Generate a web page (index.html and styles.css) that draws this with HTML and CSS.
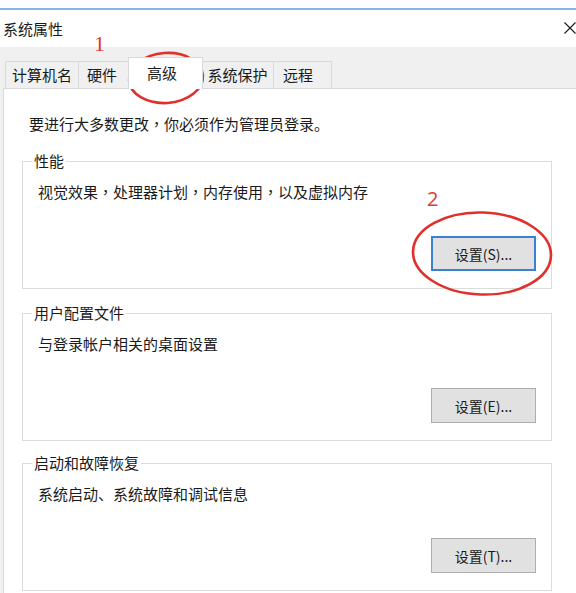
FILE: index.html
```html
<!DOCTYPE html>
<html lang="zh-CN">
<head>
<meta charset="utf-8">
<title>系统属性</title>
<link rel="stylesheet" href="styles.css">
</head>
<body>
<div class="window">
  <div class="topline"></div>
  <div class="titlebar">
    <span class="title">系统属性</span>
    <svg class="close" width="12" height="12" viewBox="0 0 12 12"><path d="M0.5 0.5 L11.5 11.5 M11.5 0.5 L0.5 11.5" stroke="#1a1a1a" stroke-width="1.1" fill="none"/></svg>
  </div>
  <div class="tabstrip">
    <div class="tab t1">计算机名</div>
    <div class="tab t2">硬件</div>
    <div class="tab t3 selected">高级</div>
    <div class="tab t4">系统保护</div>
    <div class="tab t5">远程</div>
  </div>
  <div class="panel">
    <p class="intro">要进行大多数更改<span class="cm">，</span>你必须作为管理员登录。</p>
    <fieldset class="group">
      <legend>性能</legend>
      <p class="desc">视觉效果<span class="cm">，</span>处理器计划<span class="cm">，</span>内存使用<span class="cm">，</span>以及虚拟内存</p>
      <div class="btnrow"><button class="btn default">设置(S)...</button></div>
    </fieldset>
    <fieldset class="group">
      <legend>用户配置文件</legend>
      <p class="desc">与登录帐户相关的桌面设置</p>
      <div class="btnrow"><button class="btn">设置(E)...</button></div>
    </fieldset>
    <fieldset class="group">
      <legend>启动和故障恢复</legend>
      <p class="desc">系统启动、系统故障和调试信息</p>
      <div class="btnrow"><button class="btn">设置(T)...</button></div>
    </fieldset>
  </div>

  <span class="mark mark1">1</span>
  <svg class="ring ring1" width="82" height="56" viewBox="0 0 82 56"><ellipse cx="41" cy="28" rx="37" ry="25" transform="rotate(-4 41 28)" fill="none" stroke="#e0302b" stroke-width="2.6"/></svg>
  <span class="mark mark2">2</span>
  <svg class="ring ring2" width="146" height="90" viewBox="0 0 146 90"><ellipse cx="73" cy="44.5" rx="69" ry="41" transform="rotate(2 73 44.5)" fill="none" stroke="#e0302b" stroke-width="2.6"/></svg>
</div>
</body>
</html>
```

FILE: styles.css
```css
html, body {
  margin: 0;
  padding: 0;
}
body {
  width: 576px;
  height: 593px;
  overflow: hidden;
  background: #f0f0f0;
  font-family: "Noto Sans CJK SC", "Noto Sans", sans-serif;
  color: #1a1a1a;
}
.window {
  position: relative;
  width: 576px;
  height: 593px;
}
.topline {
  height: 8px;
  background: #ffffff;
  border-bottom: 2px solid #8cb1e3;
}
.titlebar {
  height: 37px;
  background: #ffffff;
  display: flex;
  align-items: center;
  justify-content: space-between;
  padding-left: 3px;
}
.title {
  font-size: 15px;
  line-height: 20px;
}
.close {
  display: block;
  margin-top: -1px;
}
.tabstrip {
  height: 41px;
  box-sizing: border-box;
  display: flex;
  align-items: flex-end;
  padding-left: 5px;
}
.tab {
  position: relative;
  box-sizing: border-box;
  height: 27px;
  line-height: 26px;
  font-size: 15px;
  text-align: center;
  border-top: 1px solid #d9d9d9;
  border-left: 1px solid #d9d9d9;
  background: #f0f0f0;
}
.t1 { width: 73px; }
.t2 {
  width: 52px;
  text-align: left;
  padding-left: 8px;
}
.t3 {
  width: 75px;
  text-align: left;
  padding-left: 18px;
}
.t4 { width: 72px; }
.t5 {
  width: 59px;
  border-right: 1px solid #d9d9d9;
  text-align: left;
  padding-left: 9px;
}
.tab.selected {
  height: 32px;
  line-height: 30px;
  margin: 0 -2px -1px;
  background: #ffffff;
  border-right: 1px solid #d9d9d9;
  z-index: 2;
}
.panel {
  margin-left: 3px;
  height: 510px;
  background: #ffffff;
  border-top: 1px solid #d9d9d9;
  border-left: 1px solid #d9d9d9;
  overflow: hidden;
}
.intro {
  margin: 25px 0 0 25px;
  font-size: 15px;
  line-height: 20px;
}
.group {
  box-sizing: border-box;
  width: 530px;
  margin: 17px 0 0 18px;
  padding: 0 15px 17px 0;
  border: 1px solid #dcdcdc;
  min-inline-size: 0;
}
.group + .group {
  margin-top: 14px;
}
.group + .group + .group {
  margin-top: 12px;
}
.group legend {
  margin-left: 9px;
  padding: 0 2px;
  font-size: 15px;
  line-height: 20px;
}
.desc {
  margin: 11px 0 0 15px;
  font-size: 15px;
  line-height: 20px;
}
.cm {
  font-family: "Noto Sans CJK TC", "Noto Sans CJK SC", sans-serif;
  font-feature-settings: "locl" 0;
}
.btnrow {
  display: flex;
  justify-content: flex-end;
  margin-top: 34px;
}
.btn {
  box-sizing: border-box;
  width: 105px;
  height: 35px;
  margin: 0;
  padding: 0;
  background: #e1e1e1;
  border: 1px solid #adadad;
  border-radius: 0;
  font-family: "Noto Sans CJK SC", "Noto Sans", sans-serif;
  font-size: 14px;
  color: #1a1a1a;
}
.btn.default {
  border: 2px solid #3a80d5;
}
.mark {
  position: absolute;
  color: #dc3a33;
  line-height: 1;
}
.mark1 {
  left: 94px;
  top: 33px;
  font-family: "Liberation Serif", serif;
  font-size: 22px;
}
.mark2 {
  left: 427px;
  top: 189px;
  font-family: "Open Sans", "Liberation Sans", sans-serif;
  font-size: 20px;
}
.ring {
  position: absolute;
  display: block;
}
.ring1 {
  left: 125px;
  top: 50px;
}
.ring2 {
  left: 409px;
  top: 209px;
}
```
